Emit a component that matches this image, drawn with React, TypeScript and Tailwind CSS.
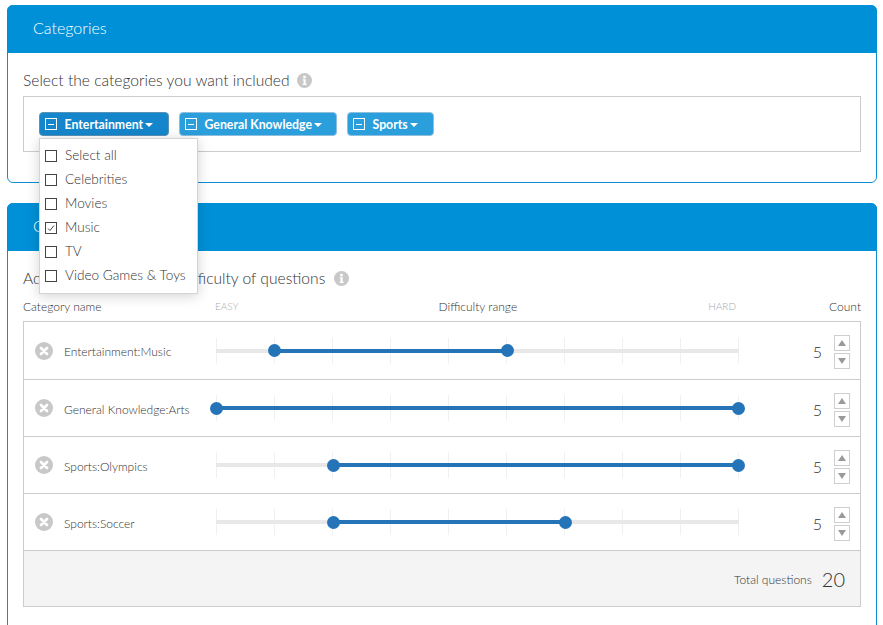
import React from 'react';

const menuItems = [
  { label: 'Select all', checked: false },
  { label: 'Celebrities', checked: false },
  { label: 'Movies', checked: false },
  { label: 'Music', checked: true },
  { label: 'TV', checked: false },
  { label: 'Video Games & Toys', checked: false },
];

// from/to are pixel offsets along the 522px track
const rows = [
  { name: 'Entertainment:Music', from: 58.5, to: 291 },
  { name: 'General Knowledge:Arts', from: 0.5, to: 522.5 },
  { name: 'Sports:Olympics', from: 117.5, to: 522.5 },
  { name: 'Sports:Soccer', from: 117.5, to: 349.5 },
];

const InfoIcon = () => (
  <svg width="15" height="15" viewBox="0 0 15 15" className="shrink-0">
    <circle cx="7.5" cy="7.5" r="7.5" fill="#c8c8c8" />
    <circle cx="7.5" cy="3.9" r="1.5" fill="#fff" />
    <path d="M5.7 6.2h3v4.6h1v1.3H5.6v-1.3h1V7.5h-.9z" fill="#fff" />
  </svg>
);

const RemoveIcon = () => (
  <svg width="18" height="18" viewBox="0 0 18 18" className="shrink-0">
    <circle cx="9" cy="9" r="9" fill="#c8c8c8" />
    <path d="M6 6l6 6M12 6l-6 6" stroke="#fff" strokeWidth="2.8" strokeLinecap="round" />
  </svg>
);

const Chip = ({ label, active, width }: { label: string; active?: boolean; width: string }) => (
  <div
    className={`flex h-6 items-center rounded border pl-[5px] text-[12.3px] font-bold text-white ${width} ${
      active ? 'border-[#5a93b8] bg-[#1586cc]' : 'border-[#8fbfdc] bg-[#2a9fdc]'
    }`}
  >
    <span className="mr-[7.5px] flex h-3 w-3 items-center justify-center border border-white">
      <span className="h-px w-1.5 bg-white" />
    </span>
    <span className="pt-[2px]">{label}</span>
    <span className="ml-[2px] mt-px h-0 w-0 border-x-[4px] border-t-[4px] border-x-transparent border-t-white" />
  </div>
);

const Slider = ({ from, to }: { from: number; to: number }) => (
  <div className="relative h-[26px] w-[523px]">
    <div className="absolute inset-0 flex justify-between">
      {Array.from({ length: 10 }).map((_, i) => (
        <span key={i} className="h-full w-px bg-[#f0f0f0]" />
      ))}
    </div>
    <div className="absolute left-0 right-0 top-[11px] h-1 bg-[#e8e8e8]" />
    <div className="absolute top-[11px] h-1 bg-[#2574b8]" style={{ left: from, width: to - from }} />
    {[from, to].map((v) => (
      <span
        key={v}
        className="absolute top-[6.5px] -ml-[6.5px] h-[13px] w-[13px] rounded-full bg-[#2574b8]"
        style={{ left: v }}
      />
    ))}
  </div>
);

const Stepper = () => (
  <div className="mt-[3px] flex flex-col gap-[2px]">
    <button className="flex h-4 w-4 items-center justify-center border border-[#cfcfcf]">
      <span className="h-0 w-0 border-x-[4px] border-b-[6px] border-x-transparent border-b-[#9a9a9a]" />
    </button>
    <button className="flex h-4 w-4 items-center justify-center border border-[#cfcfcf]">
      <span className="h-0 w-0 border-x-[4px] border-t-[6px] border-x-transparent border-t-[#9a9a9a]" />
    </button>
  </div>
);

export default function App() {
  return (
    <div className="h-[625px] overflow-hidden bg-white pl-[7px] pr-[6px] pt-[5px] font-['Lato',sans-serif] font-light text-[#333]">
      {/* Categories */}
      <section className="h-[178px] rounded-md border border-[#0d8fd1]">
        <div className="-m-px flex h-[48px] items-center rounded-t-md bg-[#0090d7] pb-[3px] pl-[26px] text-base text-white">
          Categories
        </div>
        <div className="px-[15px] pt-[19px]">
          <div className="flex h-[19px] items-center gap-[7px] text-[15.6px]">
            Select the categories you want included
            <InfoIcon />
          </div>
          <div className="relative mt-[6px] flex h-[56px] gap-[10px] border border-[#cccccc] px-[15px] pt-[15px]">
            <Chip label="Entertainment" active width="w-[130px]" />
            <Chip label="General Knowledge" width="w-[158px]" />
            <Chip label="Sports" width="w-[87px]" />

            <div className="absolute left-[15px] top-[41px] z-10 h-[156px] w-[159px] border border-[#d4d4d4] bg-white pl-[5px] pt-[5px] shadow-[0_2px_12px_rgba(0,0,0,0.18)]">
              {menuItems.map((item) => (
                <div key={item.label} className="flex h-6 items-center gap-2 text-[13.6px] text-[#333]">
                  <span className="flex h-3 w-3 items-center justify-center border border-[#444]">
                    {item.checked && (
                      <svg width="8" height="8" viewBox="0 0 8 8">
                        <path d="M1 4.5l2 2 4-5" fill="none" stroke="#444" strokeWidth="1" />
                      </svg>
                    )}
                  </span>
                  <span className="-mt-px">{item.label}</span>
                </div>
              ))}
            </div>
          </div>
        </div>
      </section>

      {/* Customize */}
      <section className="mt-5 h-[500px] rounded-md border border-[#0d8fd1]">
        <div className="-m-px flex h-[48px] items-center rounded-t-md bg-[#0090d7] pb-[3px] pl-[26px] text-base text-white">
          Customize
        </div>
        <div className="px-[15px] pt-[19px]">
          <div className="flex h-[19px] items-center gap-[9px] text-[15.6px]">
            Adjust the number and difficulty of questions
            <InfoIcon />
          </div>
          <div className="mt-[10px] flex h-[18px] items-center text-xs">
            <span className="w-[192px]">Category name</span>
            <span className="flex w-[521px] items-center justify-between">
              <span className="text-[10px] text-[#aaa]">EASY</span>
              <span className="pl-[9px]">Difficulty range</span>
              <span className="text-[10px] text-[#aaa]">HARD</span>
            </span>
            <span className="ml-auto">Count</span>
          </div>
          <div className="mt-[5px] border border-[#cccccc]">
            {rows.map((row, i) => (
              <div
                key={row.name}
                className={`flex items-center border-b border-[#cccccc] pl-[11px] pr-[10px] ${i === 0 ? 'h-[58px]' : 'h-[57px]'}`}
              >
                <RemoveIcon />
                <span className="ml-[11px] mt-[3px] w-[152px] text-xs text-[#333]">{row.name}</span>
                <Slider from={row.from} to={row.to} />
                <span className="ml-auto mr-[12px] mt-[3px] text-base">{5}</span>
                <Stepper />
              </div>
            ))}
            <div className="flex h-[55px] items-center justify-end gap-[10px] bg-[#f4f4f4] pr-[15px]">
              <span className="mt-[3px] text-xs text-[#333]">Total questions</span>
              <span className="text-xl">20</span>
            </div>
          </div>
        </div>
      </section>
    </div>
  );
}
